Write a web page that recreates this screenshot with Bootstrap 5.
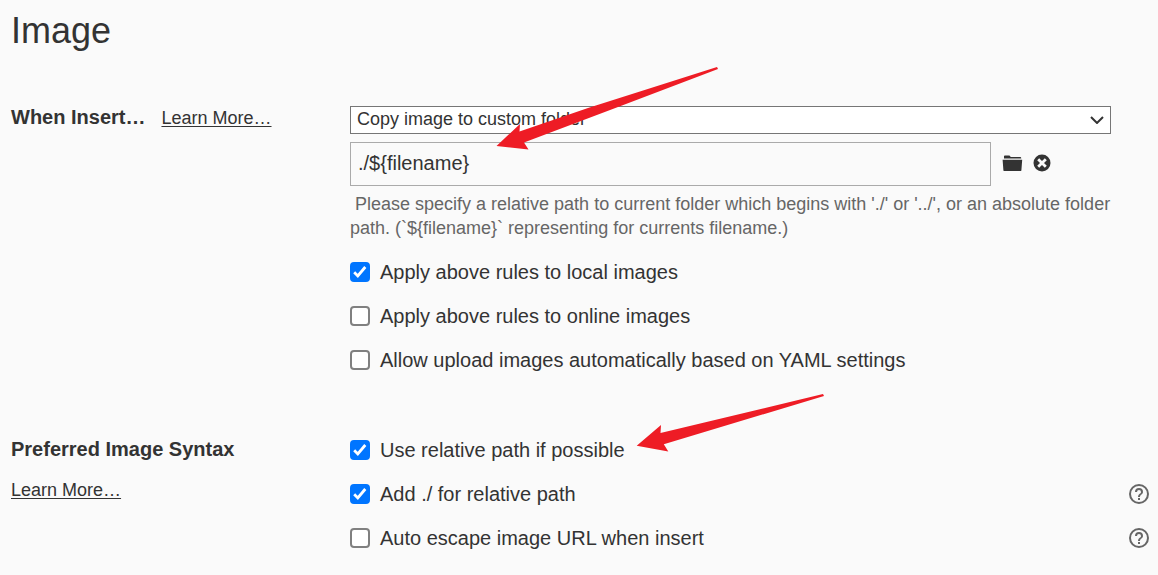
<!DOCTYPE html>
<html lang="en">
<head>
<meta charset="utf-8">
<meta name="viewport" content="width=device-width, initial-scale=1">
<title>Image</title>
<link href="https://cdn.jsdelivr.net/npm/bootstrap@5.3.0/dist/css/bootstrap.min.css" rel="stylesheet">
<style>
  body { font-family: "Liberation Sans", Arial, sans-serif; font-size: 20px; line-height: 24px; color: #333; background: #fafafa; }
  .page { padding: 10px 9px 20px 11px; }
  .page-title { font-size: 36px; line-height: 42px; font-weight: 400; margin-bottom: 54px; }
  .setting + .setting { margin-top: 66px; }
  .setting-name { flex: 0 0 339px; margin-top: -1px; }
  .setting-name h2 { font-size: 20px; line-height: 24px; font-weight: 700; }
  .setting-name a { font-size: 18px; color: #333; text-underline-offset: 2px; }
  .fields { margin-right: 38px; }
  .form-select.mode { height: 28px; padding: 0 32px 3px 6px; font-size: 18px; line-height: 22px; color: #333; border: 1px solid #767676; border-radius: 0;
    background: #fff url("data:image/svg+xml,%3Csvg xmlns='http://www.w3.org/2000/svg' viewBox='0 0 14 8'%3E%3Cpath d='M1 1l6 6 6-6' fill='none' stroke='%23333' stroke-width='2'/%3E%3C/svg%3E") no-repeat right 6px center / 14px 8px; }
  .form-control.folder { height: 44px; padding: 0 7px 2px; font-size: 20px; color: #333; background: transparent; border: 1px solid #aaa; border-radius: 0; }
  .icon-btn { display: block; padding: 0; border: 0; background: none; color: #333; }
  .icon-btn svg { display: block; }
  .icon-btn.help { color: #666; }
  .tools { width: 120px; padding: 0 0 2px 11px; gap: 10px; }
  .hint { font-size: 18px; color: #666; text-indent: 5px; margin: 6px -8px 20px 0; }
  .option { gap: 10px; }
  .option input { appearance: none; flex: none; width: 20px; height: 20px; margin: 0; border: 2px solid #808080; border-radius: 4px; background: #fff; }
  .option input:checked { border-color: #0075ff; background: #0075ff url("data:image/svg+xml,%3Csvg xmlns='http://www.w3.org/2000/svg' viewBox='0 0 16 16'%3E%3Cpath d='M2.200 8.300l3.600 3.600L13.300 3' fill='none' stroke='%23fff' stroke-width='2.800'/%3E%3C/svg%3E") center / 16px 16px no-repeat; }
  .options { gap: 20px; }
  .pointer { position: absolute; pointer-events: none; fill: #ee1c25; }
  .pointer-folder { left: 146px; top: -40px; }
  .pointer-relative { left: 286px; top: -44px; }
</style>
</head>
<body>
<main class="page">
  <h1 class="page-title">Image</h1>

  <section class="setting d-flex">
    <div class="setting-name d-flex align-items-baseline">
      <h2 class="mb-0 me-3">When Insert…</h2>
      <a href="#">Learn More…</a>
    </div>
    <div class="flex-grow-1 position-relative">
      <div class="fields">
        <select class="form-select mode mb-2" aria-label="When insert">
          <option>Copy image to custom folder</option>
        </select>
        <div class="d-flex">
          <input type="text" class="form-control folder" aria-label="Custom folder" value="./${filename}">
          <div class="tools d-flex align-items-center flex-shrink-0">
            <button class="icon-btn" type="button" aria-label="Choose folder">
              <svg width="21" height="18" viewBox="0 0 21 18" fill="currentColor"><path d="M2 4.2V2.300q0-.9.9-.9h4.300q.6 0 .9.600l.5.900h9.600q1 0 1 1v.6H2zM.6 5.700h19.600L19.400 16.200q-.1.900-1 .9H2.400q-.9 0-1-.9z"/></svg>
            </button>
            <button class="icon-btn" type="button" aria-label="Clear folder">
              <svg width="18" height="18" viewBox="0 0 18 18"><circle cx="9" cy="9" r="8.500" fill="currentColor"/><path d="M5.200 5.200l7.600 7.600M12.800 5.200l-7.600 7.600" stroke="#fafafa" stroke-width="2.800"/></svg>
            </button>
          </div>
        </div>
        <p class="hint">Please specify a relative path to current folder which begins with './' or '../', or an absolute folder path. (`${filename}` representing for currents filename.)</p>
      </div>
      <div class="options d-flex flex-column">
        <div class="option d-flex align-items-center"><input type="checkbox" id="local" checked><label for="local">Apply above rules to local images</label></div>
        <div class="option d-flex align-items-center"><input type="checkbox" id="online"><label for="online">Apply above rules to online images</label></div>
        <div class="option d-flex align-items-center"><input type="checkbox" id="upload"><label for="upload">Allow upload images automatically based on YAML settings</label></div>
      </div>
      <svg class="pointer pointer-folder" width="224" height="86" viewBox="0 0 224 86"><path d="M221 1L92 42 23.500 65.500 24 58 .5 80 32.500 83.500 28 76.500 126 39.500 222 3z"/></svg>
    </div>
  </section>

  <section class="setting d-flex">
    <div class="setting-name">
      <h2 class="mb-3">Preferred Image Syntax</h2>
      <a href="#">Learn More…</a>
    </div>
    <div class="flex-grow-1 position-relative">
      <div class="options d-flex flex-column">
        <div class="option d-flex align-items-center"><input type="checkbox" id="relative" checked><label for="relative">Use relative path if possible</label></div>
        <div class="option d-flex align-items-center"><input type="checkbox" id="prefix" checked><label for="prefix">Add ./ for relative path</label>
          <button class="icon-btn help ms-auto" type="button" aria-label="Help on relative path prefix"><svg width="20" height="20" viewBox="2 2 20 20" fill="currentColor"><path d="M11 18h2v-2h-2zM12 2a10 10 0 1 0 0 20 10 10 0 0 0 0-20zm0 18a8 8 0 1 1 0-16 8 8 0 0 1 0 16zm0-14a4 4 0 0 0-4 4h2a2 2 0 1 1 4 0c0 2-3 1.750-3 5h2c0-2.250 3-2.500 3-5a4 4 0 0 0-4-4z"/></svg></button>
        </div>
        <div class="option d-flex align-items-center"><input type="checkbox" id="escape"><label for="escape">Auto escape image URL when insert</label>
          <button class="icon-btn help ms-auto" type="button" aria-label="Help on URL escaping"><svg width="20" height="20" viewBox="2 2 20 20" fill="currentColor"><path d="M11 18h2v-2h-2zM12 2a10 10 0 1 0 0 20 10 10 0 0 0 0-20zm0 18a8 8 0 1 1 0-16 8 8 0 0 1 0 16zm0-14a4 4 0 0 0-4 4h2a2 2 0 1 1 4 0c0 2-3 1.750-3 5h2c0-2.250 3-2.500 3-5a4 4 0 0 0-4-4z"/></svg></button>
        </div>
      </div>
      <svg class="pointer pointer-relative" width="190" height="60" viewBox="0 0 190 60"><path d="M187 0L24.500 39 25 31 .7 51.700 32.300 57.600 27.800 50.300 188 2z"/></svg>
    </div>
  </section>
</main>
<script src="https://cdn.jsdelivr.net/npm/bootstrap@5.3.0/dist/js/bootstrap.bundle.min.js"></script>
</body>
</html>
